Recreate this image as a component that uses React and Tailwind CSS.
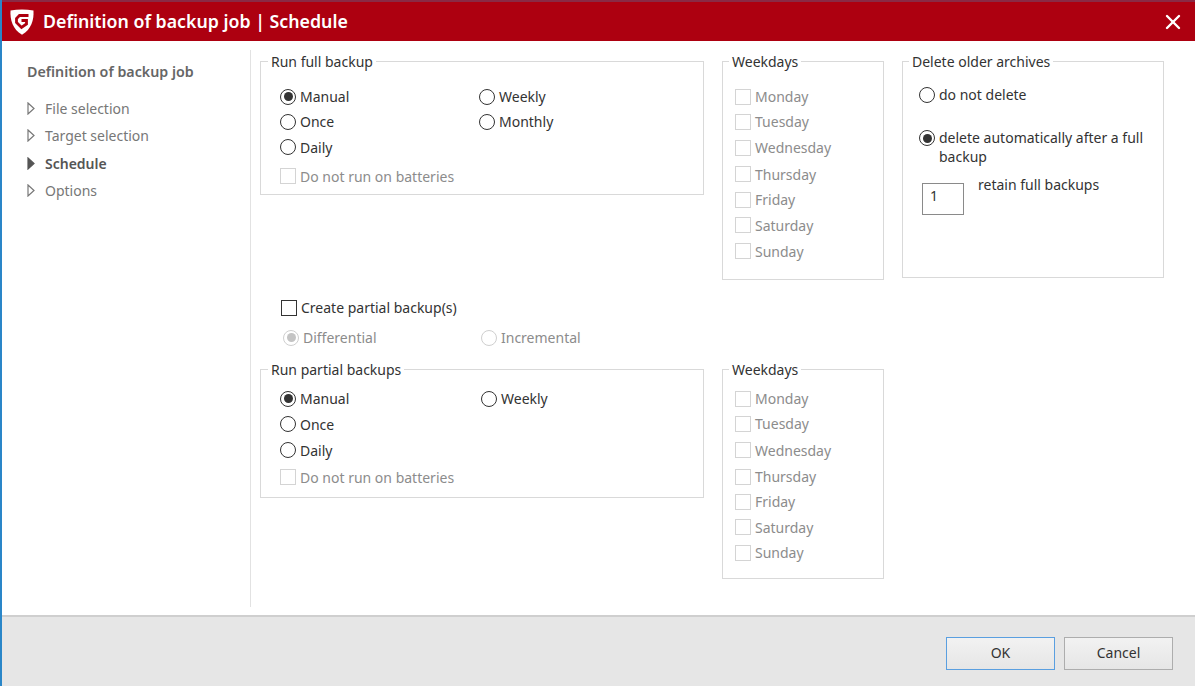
import { X } from 'lucide-react'

const WEEKDAYS = ['Monday', 'Tuesday', 'Wednesday', 'Thursday', 'Friday', 'Saturday', 'Sunday']
const TOP_ROWS = ['h-[25px]', 'h-[25px]', 'h-[27px]', 'h-[26px]', 'h-[25px]', 'h-[26px]', 'h-[26px]']
const BOTTOM_ROWS = ['h-[25px]', 'h-[25px]', 'h-[28px]', 'h-[25px]', 'h-[25px]', 'h-[26px]', 'h-[25px]']
const NAV = [
  { label: 'File selection' },
  { label: 'Target selection' },
  { label: 'Schedule', active: true },
  { label: 'Options' },
]

function Logo() {
  return (
    <svg width="24" height="26" viewBox="0 0 24 26" className="shrink-0">
      <path d="M0.5 1.5 C8 0.3 16 0.3 23.5 1.5 C24 11 21.5 20 12 25.8 C2.5 20 0 11 0.5 1.5 Z" fill="#fff" />
      <path d="M18.5 6.5 H9.5 L6.5 9.5 V13.5 L11.5 18.5 L16.5 15 V11.5 H11.5" fill="none" stroke="#ad0010" strokeWidth="2.8" />
    </svg>
  )
}

function Radio({ label, checked, disabled, className = '' }) {
  return (
    <div className={`flex items-center gap-[4px] ${className}`}>
      <span className={`flex h-[16px] w-[16px] shrink-0 items-center justify-center rounded-full border ${disabled ? 'border-[#cfcfcf]' : 'border-[#333]'}`}>
        {checked && <span className={`h-[9px] w-[9px] rounded-full ${disabled ? 'bg-[#c4c4c4]' : 'bg-[#333]'}`} />}
      </span>
      <span className={disabled ? 'text-[#8c8c8c]' : 'text-[#333]'}>{label}</span>
    </div>
  )
}

function Check({ label, disabled, className = '' }) {
  return (
    <div className={`flex items-center gap-[4px] ${className}`}>
      <span className={`h-[16px] w-[16px] shrink-0 border ${disabled ? 'border-[#d4d4d4]' : 'border-[#333]'}`} />
      <span className={disabled ? 'text-[#8c8c8c]' : 'text-[#333]'}>{label}</span>
    </div>
  )
}

function Group({ title, legend = 'left-[6px]', className = '', children }) {
  return (
    <div className={`relative border border-[#d9d9d9] ${className}`}>
      <span className={`absolute -top-[10px] bg-white px-[3px] leading-[19px] text-[#333] ${legend}`}>{title}</span>
      {children}
    </div>
  )
}

function Weekdays({ rows, className }) {
  return (
    <Group title="Weekdays" className={`w-[162px] shrink-0 pl-[12px] ${className}`}>
      {WEEKDAYS.map((d, i) => (
        <Check key={d} label={d} disabled className={rows[i]} />
      ))}
    </Group>
  )
}

export default function App() {
  return (
    <div className="flex h-[686px] w-[1195px] flex-col overflow-hidden border-l-2 border-l-[#2a86c8] bg-white font-['Noto_Sans',sans-serif] text-[14px]">
      <header className="-ml-[2px] flex h-[41px] shrink-0 items-center border-t-2 border-t-[#8a2a45] bg-[#ad0010] pl-[10px] pr-[10px]">
        <Logo />
        <h1 className="ml-[9px] flex-1 text-[17.75px] font-semibold text-white">Definition of backup job | Schedule</h1>
        <X size={24} strokeWidth={2.4} className="text-white" />
      </header>

      <main className="flex min-h-0 flex-1 pt-[9px]">
        <nav className="mb-[8px] w-[249px] shrink-0 border-r border-[#e2e2e2] pl-[25px] pt-[11px]">
          <h2 className="text-[14.25px] font-semibold text-[#666]">Definition of backup job</h2>
          <ul className="mt-[12px]">
            {NAV.map((n) => (
              <li key={n.label} className={`flex h-[27.5px] items-center gap-[10px] ${n.active ? 'font-semibold text-[#555]' : 'text-[#777]'}`}>
                <svg width="8" height="13" viewBox="0 0 8 13" className="shrink-0">
                  <path d="M1 1 L7 6.5 L1 12 Z" fill={n.active ? '#555' : 'none'} stroke={n.active ? '#555' : '#777'} strokeWidth="1.2" />
                </svg>
                {n.label}
              </li>
            ))}
          </ul>
        </nav>

        <section className="flex-1 pl-[9px] pt-[11px]">
          <div className="flex h-[219px] items-start gap-[18px]">
            <Group title="Run full backup" legend="left-[7px]" className="h-[134px] w-[444px] shrink-0 pl-[19px] pt-[22px]">
              <div className="grid grid-cols-[199px_1fr]">
                <Radio label="Manual" checked className="h-[25px]" />
                <Radio label="Weekly" className="h-[25px]" />
                <Radio label="Once" className="h-[25px]" />
                <Radio label="Monthly" className="h-[25px]" />
                <Radio label="Daily" className="col-span-2 h-[26px]" />
                <Check label="Do not run on batteries" disabled className="col-span-2 h-[32px]" />
              </div>
            </Group>
            <Weekdays rows={TOP_ROWS} className="h-[219px] pt-[22px]" />
            <Group title="Delete older archives" className="h-[217px] w-[262px] shrink-0 pl-[16px] pt-[22px]">
              <Radio label="do not delete" />
              <div className="mt-[23px] flex gap-[4px]">
                <span className="mt-[2px] flex h-[16px] w-[16px] shrink-0 items-center justify-center rounded-full border border-[#333]">
                  <span className="h-[9px] w-[9px] rounded-full bg-[#333]" />
                </span>
                <span className="leading-[19px] text-[#333]">delete automatically after a full backup</span>
              </div>
              <div className="mt-[17px] flex items-start gap-[14px] pl-[3px]">
                <span className="h-[32px] w-[42px] border border-[#8a8a8a] pl-[7px] leading-[23px] text-[#333]">1</span>
                <span className="-mt-[8px] leading-[19px] text-[#333]">retain full backups</span>
              </div>
            </Group>
          </div>

          <Check label="Create partial backup(s)" className="ml-[21px] mt-[18px] h-[19px]" />
          <div className="ml-[23px] mt-[10px] grid h-[20px] grid-cols-[198px_1fr]">
            <Radio label="Differential" checked disabled />
            <Radio label="Incremental" disabled />
          </div>

          <div className="mt-[22px] flex items-start gap-[18px]">
            <Group title="Run partial backups" legend="left-[7px]" className="h-[129px] w-[444px] shrink-0 pl-[19px] pt-[16px]">
              <div className="grid grid-cols-[201px_1fr]">
                <Radio label="Manual" checked className="h-[25px]" />
                <Radio label="Weekly" className="h-[25px]" />
                <Radio label="Once" className="col-span-2 h-[26px]" />
                <Radio label="Daily" className="col-span-2 h-[26px]" />
                <Check label="Do not run on batteries" disabled className="col-span-2 h-[28px]" />
              </div>
            </Group>
            <Weekdays rows={BOTTOM_ROWS} className="h-[210px] pt-[16px]" />
          </div>
        </section>
      </main>

      <footer className="flex h-[71px] shrink-0 items-start justify-end gap-[9px] border-t-2 border-t-[#cfcfcf] bg-[#e6e6e6] pr-[22px] pt-[20px]">
        <button className="h-[33px] w-[109px] border border-[#5a9fe0] bg-linear-to-b from-[#f2f2f2] to-[#e6e6e6] pb-[2px] text-[#333]">OK</button>
        <button className="h-[33px] w-[109px] border border-[#adadad] bg-linear-to-b from-[#f2f2f2] to-[#e6e6e6] pb-[2px] text-[#333]">Cancel</button>
      </footer>
    </div>
  )
}
